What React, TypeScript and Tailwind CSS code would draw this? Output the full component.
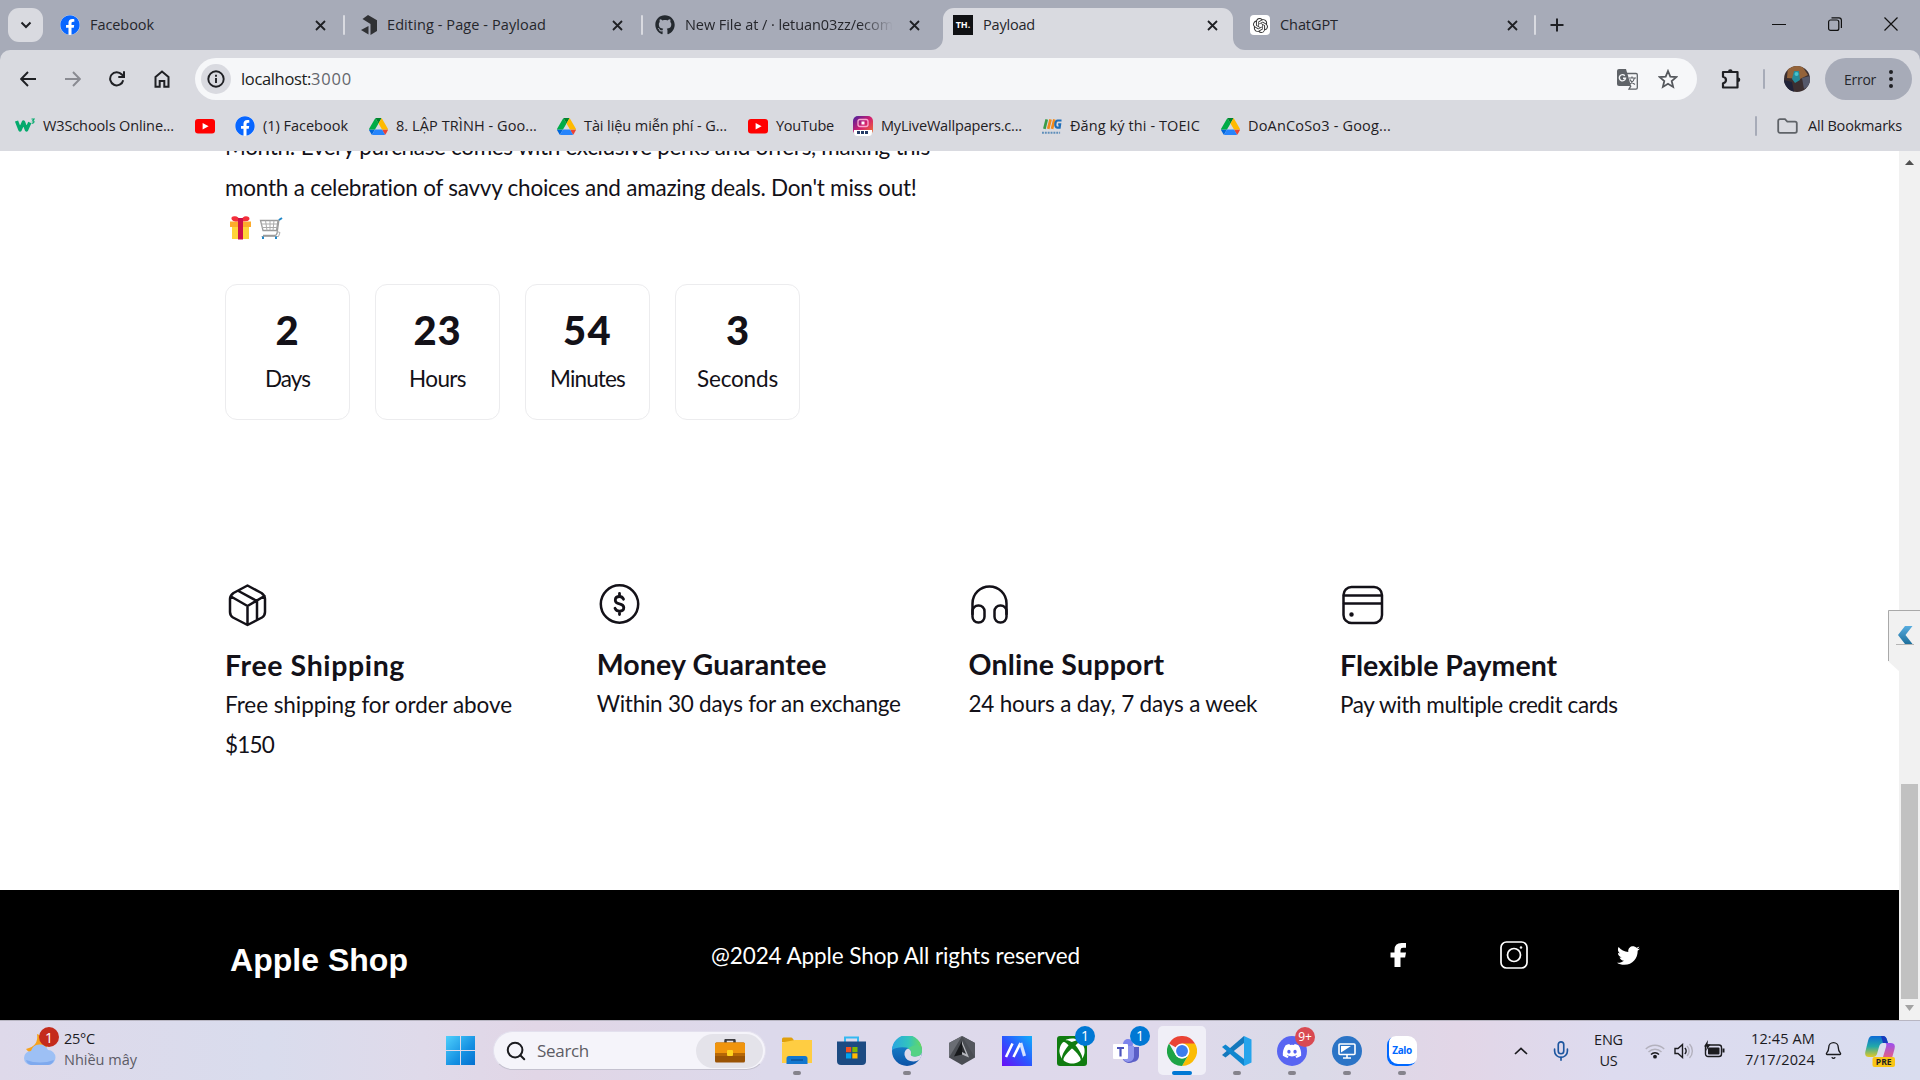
import React, { useLayoutEffect, useRef, useState } from "react";
import { FaGithub, FaFacebook, FaTwitter, FaXbox, FaDiscord } from "react-icons/fa";
import { SiOpenai } from "react-icons/si";
import { Search, Mic, Bell } from "lucide-react";

const UI = "font-['Open_Sans','Noto_Sans',sans-serif]";
const BODY = "font-['Lato','Open_Sans',sans-serif]";

/* One line of text whose tracking is adjusted so that it spans `w` pixels. */
function Fit({ w, children, className = "" }: { w: number; children: string; className?: string }) {
  const ref = useRef<HTMLSpanElement>(null);
  const [ls, setLs] = useState(0);
  useLayoutEffect(() => {
    const measure = () => {
      const el = ref.current;
      if (!el) return;
      el.style.letterSpacing = "0px";
      const natural = el.getBoundingClientRect().width;
      const next = (w - natural) / Array.from(children).length;
      el.style.letterSpacing = next + "px";
      setLs(next);
    };
    measure();
    document.fonts.ready.then(measure);
  }, [w, children]);
  return (
    <span className="block shrink-0 whitespace-pre">
      <span ref={ref} className={"inline-block " + className} style={{ letterSpacing: ls }}>
        {children}
      </span>
    </span>
  );
}

function Drive() {
  return (
    <svg className="h-[17px] w-[19px] shrink-0" viewBox="0 0 87.3 78">
      <path fill="#0066da" d="m6.6 66.85 3.85 6.65c.8 1.4 1.95 2.5 3.3 3.3l13.75-23.8h-27.5c0 1.55.4 3.1 1.2 4.5z" />
      <path fill="#00ac47" d="m43.65 25-13.75-23.8c-1.35.8-2.5 1.9-3.3 3.3l-25.4 44a9.06 9.06 0 0 0 -1.2 4.5h27.5z" />
      <path fill="#ea4335" d="m73.55 76.8c1.35-.8 2.5-1.9 3.3-3.3l1.6-2.75 7.65-13.25c.8-1.4 1.2-2.95 1.2-4.5h-27.5l5.85 11.5z" />
      <path fill="#00832d" d="m43.65 25 13.75-23.8c-1.35-.8-2.9-1.2-4.5-1.2h-18.5c-1.6 0-3.15.45-4.5 1.2z" />
      <path fill="#2684fc" d="m59.8 53h-32.3l-13.75 23.8c1.35.8 2.9 1.2 4.5 1.2h50.8c1.6 0 3.15-.45 4.5-1.2z" />
      <path fill="#ffba00" d="m73.4 26.5-12.7-22c-.8-1.4-1.95-2.5-3.3-3.3l-13.75 23.8 16.15 28h27.45c0-1.55-.4-3.1-1.2-4.5z" />
    </svg>
  );
}

function FbLogo() {
  return (
    <span className="grid size-5 shrink-0 place-items-center rounded-full bg-white">
      <FaFacebook className="size-5 text-[#0866ff]" />
    </span>
  );
}

function YtLogo() {
  return (
    <svg className="h-[15px] w-[20px] shrink-0" viewBox="0 0 20 15">
      <rect width="20" height="14.5" rx="3" fill="#f00" />
      <path d="M7.6 4v6.6l6-3.3z" fill="#fff" />
    </svg>
  );
}

function Close() {
  return (
    <svg className="size-[11px] shrink-0" viewBox="0 0 11 11" stroke="#1f2024" strokeWidth="1.8">
      <path d="M1 1l9 9M10 1l-9 9" />
    </svg>
  );
}

function Tab({ icon, label, w, pl, width, active, fade }: any) {
  return (
    <div className={width + " relative flex h-[42px] shrink-0 items-center pb-[8px] " + pl + (active ? " rounded-t-[11px] bg-[#d9dae0]" : "")}>
      {icon}
      <div className={"ml-[10px] h-[22px] leading-[21px] " + (fade ? "[mask-image:linear-gradient(90deg,#000_84%,transparent)]" : "")}>
        <Fit w={w} className={UI + " text-[14.5px] text-[#25262b]"}>{label}</Fit>
      </div>
      <div className="ml-auto pr-[15px]"><Close /></div>
      {active && (
        <>
          <svg className="absolute bottom-0 -left-[12px] size-3" viewBox="0 0 12 12"><path d="M12 0v12H0A12 12 0 0 0 12 0" fill="#d9dae0" /></svg>
          <svg className="absolute -right-[12px] bottom-0 size-3" viewBox="0 0 12 12"><path d="M0 0v12h12A12 12 0 0 1 0 0" fill="#d9dae0" /></svg>
        </>
      )}
    </div>
  );
}

const Sep = ({ c }: { c: string }) => <div className={"h-5 w-[2px] shrink-0 rounded " + c} />;

function TabStrip() {
  return (
    <div className="flex h-[50px] items-end bg-[#a7abb8]">
      <div className="mb-2 ml-2 grid h-[34px] w-[35px] shrink-0 place-items-center rounded-[11px] bg-[#d9dae0]">
        <svg className="h-2 w-3" viewBox="0 0 12 8" fill="none" stroke="#1f2024" strokeWidth="2"><path d="M1.5 1.5L6 6l4.500-4.500" /></svg>
      </div>
      <Tab width="w-[298px]" pl="pl-[17px]" icon={<FbLogo />} label="Facebook" w={64} />
      <div className="mb-[15px] ml-[2px]"><Sep c="bg-[#d9dae0]" /></div>
      <Tab
        width="w-[293px]" pl="pl-[16px]" label="Editing - Page - Payload" w={159}
        icon={<svg className="h-5 w-4 shrink-0" viewBox="0 0 16 20" fill="#303134"><path d="M7 0l9 5.300v10.700l-6.500 4V9L1.500 4zM7.500 11v8.500L0 15z" /></svg>}
      />
      <div className="mb-[15px] ml-[3px]"><Sep c="bg-[#d9dae0]" /></div>
      <Tab width="w-[292px]" pl="pl-[12px]" icon={<FaGithub className="size-5 shrink-0 text-[#24292f]" />} label="New File at / · letuan03zz/ecom" w={208} fade />
      <div className="ml-[8px]">
        <Tab
          active width="w-[290px]" pl="pl-[10px]" label="Payload" w={52}
          icon={<span className={UI + " grid size-5 shrink-0 place-items-center bg-[#101114] text-[9px] font-bold text-white"}>TH.</span>}
        />
      </div>
      <Tab
        width="w-[300px]" pl="pl-[17px]" label="ChatGPT" w={58}
        icon={<span className="grid size-5 shrink-0 place-items-center rounded-[4px] bg-white"><SiOpenai className="size-[15px] text-[#333]" /></span>}
      />
      <div className="mb-[15px] ml-[1px]"><Sep c="bg-[#d9dae0]" /></div>
      <svg className="mb-[18px] ml-[14px] size-[14px]" viewBox="0 0 14 14" stroke="#1f2024" strokeWidth="2"><path d="M7 .5v13M.5 7h13" /></svg>
      <div className="mb-[19px] ml-auto flex items-center gap-[42px] pr-[22px]">
        <svg className="size-[14px]" viewBox="0 0 14 14" stroke="#111"><path d="M0 7.500h14" /></svg>
        <svg className="size-[14px]" viewBox="0 0 14 14" fill="none" stroke="#111" strokeWidth="1.200"><rect x=".6" y="3" width="10.200" height="10.400" rx="2" /><path d="M3.500 .8h7.500a2.500 2.500 0 0 1 2.400 2.400v7.800" /></svg>
        <svg className="size-[14px]" viewBox="0 0 14 14" stroke="#111" strokeWidth="1.200"><path d="M.5 .5l13 13M13.500 .5l-13 13" /></svg>
      </div>
    </div>
  );
}

function Toolbar() {
  return (
    <div className="bg-[#a7abb8]">
      <div className="flex h-[58px] items-center rounded-t-[10px] bg-[#d9dae0] pr-2 pl-5">
        <svg className="h-4 w-4 shrink-0" viewBox="0 0 16 16" fill="none" stroke="#1f2024" strokeWidth="1.900"><path d="M16 8H1.500M8 1L1.200 8 8 15" /></svg>
        <svg className="ml-[29px] h-4 w-4 shrink-0" viewBox="0 0 16 16" fill="none" stroke="#8a8b92" strokeWidth="1.900"><path d="M0 8h14.500M8 1l6.800 7L8 15" /></svg>
        <svg className="ml-[28px] h-4 w-4 shrink-0" viewBox="0 0 16 16" fill="none" stroke="#1f2024" strokeWidth="2"><path d="M14.200 9.200A6.600 6.600 0 1 1 12.800 3.500L14.800 6M15 .3V6H9.300" /></svg>
        <svg className="ml-[29px] h-[18px] w-4 shrink-0" viewBox="0 0 16 18" fill="none" stroke="#1f2024" strokeWidth="2"><path d="M1.500 7L8 1.500 14.500 7v9.800h-4.200V11H5.700v5.800H1.500z" /></svg>
        <div className="ml-[25px] flex h-[42px] w-[1502px] shrink-0 items-center rounded-full bg-[#f6f7f9] pl-[6px]">
          <span className="grid size-[30px] shrink-0 place-items-center rounded-full bg-[#d9dae0]">
            <svg className="size-[18px]" viewBox="0 0 18 18" fill="none" stroke="#1f2024" strokeWidth="1.900"><circle cx="9" cy="9" r="7.700" /><path d="M9 8v5M9 4.700v2" /></svg>
          </span>
          <div className="ml-[10px] flex items-center leading-[22px]">
            <Fit w={70} className={UI + " text-[16.5px] text-[#1b1c20]"}>localhost:</Fit>
            <Fit w={41} className={UI + " text-[16.5px] text-[#64666c]"}>3000</Fit>
          </div>
          <svg className="ml-auto h-[21px] w-[21px] shrink-0" viewBox="0 0 21 21">
            <path d="M2 0h7l5 17H2a2 2 0 0 1-2-2V2a2 2 0 0 1 2-2z" fill="#5f6368" />
            <path d="M9.500 4.500H19a1.300 1.300 0 0 1 1.300 1.300v13a1.300 1.300 0 0 1-1.300 1.300h-7l2-3.500" fill="none" stroke="#5f6368" strokeWidth="1.300" />
            <path d="M7.800 6.700A3.100 3.100 0 1 0 8.500 9.300H6" fill="none" stroke="#f6f7f9" strokeWidth="1.400" />
            <path d="M11.800 9h7.200M15 7.500V9M17.500 9c-.5 3-3 5-4.300 6M13 10.500c1 2.500 3 4 5 5" fill="none" stroke="#5f6368" strokeWidth="1.200" />
          </svg>
          <svg className="mr-[19px] ml-[20px] size-5 shrink-0" viewBox="0 0 20 20" fill="none" stroke="#55585d" strokeWidth="1.800"><path d="M10 2l2.300 5.600 6 .5-4.600 3.900 1.400 5.900L10 14.700l-5.100 3.200L6.300 12 1.700 8.100l6-.5z" /></svg>
        </div>
        <svg className="ml-[23px] size-[22px] shrink-0" viewBox="0 0 22 22" fill="none" stroke="#1f2024" strokeWidth="2.200" strokeLinejoin="round"><path d="M3 4h14.500v15.500H3v-4.200q3-.8 3-3.300t-3-3.300z" /><path d="M8 3.500a2.300 2.300 0 0 1 4.600 0zM18 9.500a2.300 2.300 0 0 1 0 4.600z" fill="#1f2024" stroke="none" /></svg>
        <div className="ml-[21px]"><Sep c="bg-[#a7abb8]" /></div>
        <svg className="ml-[19px] size-[26px] shrink-0 rounded-full" viewBox="0 0 26 26">
          <rect width="26" height="26" fill="#3c2f30" /><path d="M4 0h14l6 9-8 4L3 12z" fill="#94633a" /><path d="M10 5h5l1 9-5 3-3-4z" fill="#258b9a" /><path d="M0 14l8 2 2 10H0z" fill="#1f2238" /><path d="M18 12l8-2v9l-6 4z" fill="#55586a" /><circle cx="12.500" cy="8" r="2" fill="#46c4cf" />
        </svg>
        <div className="ml-[15px] flex h-[42px] w-[87px] shrink-0 items-center rounded-full bg-[#a7abb8] pb-px pl-[19px]">
          <Fit w={32} className={UI + " text-[14px] text-[#25262b]"}>Error</Fit>
          <svg className="ml-[13px] h-[18px] w-1" viewBox="0 0 4 18" fill="#1f2024"><circle cx="2" cy="2" r="2" /><circle cx="2" cy="9" r="2" /><circle cx="2" cy="16" r="2" /></svg>
        </div>
      </div>
    </div>
  );
}

function Bookmark({ icon, label, w, ml }: any) {
  return (
    <div className={"flex shrink-0 items-center " + ml}>
      {icon}
      {label && <div className="ml-[8px] pb-[2px]"><Fit w={w} className={UI + " text-[14.5px] text-[#1f2024]"}>{label}</Fit></div>}
    </div>
  );
}

function Bookmarks() {
  return (
    <div className="flex h-[43px] items-center bg-[#d9dae0] pb-[7px] leading-5">
      <Bookmark ml="ml-[15px]" label="W3Schools Online..." w={131}
        icon={<svg className="h-4 w-5 shrink-0" viewBox="0 0 20 16" fill="none" stroke="#04aa6d"><path d="M1.500 3l3.500 9 3.500-8 3 8 3.300-7.500" strokeWidth="3.400" strokeLinejoin="round" /><path d="M16.500 1h2.500l-1.300 1.800c2 0 1.600 2.900-1 2.200" strokeWidth="1.200" /></svg>} />
      <Bookmark ml="ml-[21px]" icon={<YtLogo />} />
      <Bookmark ml="ml-[20px]" icon={<FbLogo />} label="(1) Facebook" w={85} />
      <Bookmark ml="ml-[21px]" icon={<Drive />} label="8. LẬP TRÌNH - Goo..." w={141} />
      <Bookmark ml="ml-[20px]" icon={<Drive />} label="Tài liệu miễn phí - G..." w={143} />
      <Bookmark ml="ml-[21px]" icon={<YtLogo />} label="YouTube" w={58} />
      <Bookmark ml="ml-[19px]" label="MyLiveWallpapers.c..." w={141}
        icon={<svg className="h-5 w-5 shrink-0" viewBox="0 0 20 20"><defs><linearGradient id="mlw" x1="0" x2="1" y2="1"><stop stopColor="#4520a0" /><stop offset=".5" stopColor="#d3206f" /><stop offset="1" stopColor="#f57b2a" /></linearGradient></defs><rect width="20" height="19" rx="5" fill="url(#mlw)" /><rect x="5" y="3.500" width="10" height="7" rx="2" fill="none" stroke="#f9a8d0" strokeWidth="1.300" /><path d="M8.500 5.500h3v3h-3z" fill="#fff" /><path d="M1 14h18v2.500a3.500 3.500 0 0 1-3.500 3.500h-11A3.500 3.500 0 0 1 1 16.500z" fill="#fff" /><path d="M4 16.500h12" stroke="#243b66" strokeWidth="3" strokeDasharray="3 1" /></svg>} />
      <Bookmark ml="ml-[20px]" label="Đăng ký thi - TOEIC" w={130}
        icon={<svg className="h-[17px] w-[20px] shrink-0" viewBox="0 0 21 17" fill="none"><path d="M2.500 11L5 1" stroke="#3a9c49" strokeWidth="2.800" /><path d="M6.500 11L9 1M10.500 11L13 1" stroke="#f18a1c" strokeWidth="2.800" /><path d="M20.500 2.200h-4c-3 0-3.500 7.500-.5 7.500h2.500l.5-3.500h-2" stroke="#1e6db8" strokeWidth="2.300" /><path d="M0 15h19" stroke="#5d8db9" strokeWidth="2" strokeDasharray="2 1" /></svg>} />
      <Bookmark ml="ml-[21px]" icon={<Drive />} label="DoAnCoSo3 - Goog..." w={143} />
      <div className="ml-auto flex items-center pr-[18px]">
        <Sep c="bg-[#a7abb8]" />
        <svg className="ml-5 h-4 w-[21px]" viewBox="0 0 21 16" fill="none" stroke="#5f6368" strokeWidth="1.800"><path d="M1.200 3a1.800 1.800 0 0 1 1.800-1.800h5l2.300 2.400H18A1.800 1.800 0 0 1 19.800 5.400V13A1.800 1.800 0 0 1 18 14.800H3A1.800 1.800 0 0 1 1.200 13z" /></svg>
        <div className="ml-[10px] pb-[2px]"><Fit w={94} className={UI + " text-[14.5px] text-[#1f2024]"}>All Bookmarks</Fit></div>
      </div>
    </div>
  );
}

const CartIcon = () => (
  <svg className="size-6" viewBox="0 0 24 24" fill="none">
    <path d="M20 3.500l-2 14q-.5 2-2.500 2H4" stroke="#9b9b9b" strokeWidth="1.300" />
    <path d="M1.500 4.500h17.500l-1.500 10H4z" stroke="#9b9b9b" strokeWidth="1.300" />
    <path d="M2 8h16.500M3 11.500h15M6.500 4.500l1.500 10M11 4.500v10M15 4.500l-1 10M18 15.500l3 1-1.500 4H2.500" stroke="#ababab" />
    <path d="M20 4l3-2" stroke="#2188c9" strokeWidth="2" /><path d="M4 20.500v2.500M17 20.500v2.500" stroke="#2188c9" strokeWidth="2" />
  </svg>
);

const GiftIcon = () => (
  <svg className="h-6 w-[21px]" viewBox="0 0 21 24">
    <path d="M2 9h17v14H2z" fill="#ffd338" /><path d="M0 5.500h21V11H0z" fill="#fdab2c" /><path d="M8 5h5v18.500H8z" fill="#cc1048" />
    <path d="M10.500 5.500Q2 6 1.500 3T5 .3q3.500 0 5.500 5.200Q12.500.3 16 .3T19.500 3t-9 2.500" fill="#f32f3a" /><path d="M8 2h5v4H8z" fill="#cc1048" />
  </svg>
);

function Count({ n, nw, label, w }: any) {
  return (
    <div className="flex h-[136px] w-[125px] flex-col items-center rounded-xl border border-[#ececee] pt-[20px]">
      <div className="h-[51px] leading-[51px]"><Fit w={nw} className={BODY + " text-[40px] font-black text-[#131118]"}>{n}</Fit></div>
      <div className="h-[46px] leading-[46px]"><Fit w={w} className={BODY + " text-[22.5px] text-[#131118]"}>{label}</Fit></div>
    </div>
  );
}

function Feature({ icon, title, tw, lines, down }: any) {
  return (
    <div className={"flex w-[371.700px] shrink-0 flex-col " + (down ? "pt-[1px]" : "")}>
      <div className="h-[62px]">{icon}</div>
      <div className="h-[40px] leading-[41px]"><Fit w={tw} className={BODY + " text-[28.5px] font-bold text-[#131118]"}>{title}</Fit></div>
      {lines.map(([t, w]: any) => (
        <div key={t} className="h-10 leading-[40px]"><Fit w={w} className={BODY + " text-[22.5px] text-[#131118]"}>{t}</Fit></div>
      ))}
    </div>
  );
}

const stroke = { fill: "none", stroke: "#131118", strokeWidth: 2.5, strokeLinecap: "round", strokeLinejoin: "round" } as const;

function Page() {
  return (
    <div className="relative flex h-[869px] bg-white">
      <div className="flex w-[1899px] flex-col">
        <div className="flex h-[739px] flex-col overflow-hidden pl-[225px]">
          <div className="-mt-[24px] h-[41px] shrink-0 leading-[40px]"><Fit w={704} className={BODY + " text-[22.5px] text-[#131118]"}>Month! Every purchase comes with exclusive perks and offers, making this</Fit></div>
          <div className="h-10 shrink-0 leading-[40px]"><Fit w={692} className={BODY + " text-[22.5px] text-[#131118]"}>month a celebration of savvy choices and amazing deals. Don't miss out!</Fit></div>
          <div className="flex h-10 shrink-0 items-center gap-2 pb-px pl-[5px]"><GiftIcon /><CartIcon /></div>
          <div className="mt-[36px] flex shrink-0 gap-[25px]">
            <Count n="2" nw={24} label="Days" w={45} />
            <Count n="23" nw={48} label="Hours" w={57} />
            <Count n="54" nw={49} label="Minutes" w={75} />
            <Count n="3" nw={23} label="Seconds" w={81} />
          </div>
          <div className="mt-[162px] flex">
            <Feature down title="Free Shipping" tw={180} lines={[["Free shipping for order above", 287], ["$150", 49]]}
              icon={<svg className="ml-[3px] h-[44px] w-[40px]" viewBox="0 0 40 44" {...stroke}><path d="M19.500 2.500l14 7.500q3.500 2.500 3.500 6v13q0 3.500-3 5.500L19.500 42 5 34.500q-3-2-3-5.500V16q0-3.500 3.500-6zM3 13.500L19.500 23 36.500 13M19.500 23v18.500M10.500 8L29 18v18" /></svg>} />
            <Feature title="Money Guarantee" tw={230} lines={[["Within 30 days for an exchange", 304]]}
              icon={<svg className="mt-px ml-[2px] h-[42px] w-[42px]" viewBox="0 0 42 42" {...stroke}><circle cx="20.500" cy="21" r="18.700" /><path d="M24.500 16.200q-1.300-2.700-4-2.700-4.200 0-4.200 3.700 0 2.800 4.200 3.600t4.300 3.800q0 3.600-4.300 3.600-3.200 0-4.500-3M20.500 10.500v3M20.500 28.500v3" strokeWidth="2.800" /></svg>} />
            <Feature title="Online Support" tw={196} lines={[["24 hours a day, 7 days a week", 289]]}
              icon={<svg className="mt-[2px] ml-[2px] h-[42px] w-[40px]" viewBox="0 0 40 42" {...stroke}><path d="M2.500 30V19.500a17 17 0 0 1 34 0V30" /><rect x="2.500" y="21.500" width="12" height="17" rx="5.800" /><rect x="24.500" y="21.500" width="12" height="17" rx="5.800" /></svg>} />
            <Feature down title="Flexible Payment" tw={217} lines={[["Pay with multiple credit cards", 278]]}
              icon={<svg className="mt-px ml-[1px] h-[44px] w-[44px]" viewBox="0 0 44 44" {...stroke}><rect x="2.500" y="3" width="38.500" height="36" rx="8" /><path d="M3 11.500h37.500M3 19.500h37.500" /><circle cx="10.500" cy="30.500" r="1" fill="#131118" /></svg>} />
          </div>
        </div>
        <div className="flex h-[130px] items-center bg-black pl-[230px] text-white">
          <div className="pt-[9px]"><Fit w={178} className="font-['Liberation_Sans',sans-serif] text-[32px] font-bold">Apple Shop</Fit></div>
          <div className="ml-[303px] pt-px"><Fit w={369} className={BODY + " text-[22.500px]"}>@2024 Apple Shop All rights reserved</Fit></div>
          <svg className="ml-[310px] h-[24px] w-[17px]" viewBox="0 0 17 24" fill="#fff"><path d="M4.500 24V14.500H.5V9.500h4V6.800Q4.500 0 11.500 0H16v4.800h-3q-2.500 0-2.500 2.400v2.300H16l-.9 5h-4.600V24z" /></svg>
          <svg className="ml-[93px] size-7" viewBox="0 0 28 28" fill="none" stroke="#fff" strokeWidth="1.700"><rect x="1" y="1" width="26" height="26" rx="5.500" /><circle cx="14" cy="14" r="6.500" /><circle cx="21" cy="6.500" r="1" fill="#fff" strokeWidth=".5" /></svg>
          <FaTwitter className="ml-[89px] size-[23px]" />
        </div>
      </div>
      <div className="flex w-[21px] flex-col items-center bg-[#f1f1f1] py-[7px]">
        <svg className="mt-[2px] h-[5px] w-[9px]" viewBox="0 0 9 5"><path d="M0 5L4.500 0 9 5z" fill="#505050" /></svg>
        <div className="mt-auto mb-[6px] h-[215px] w-[17px] bg-[#c1c1c1]" />
        <svg className="mb-[2px] h-[6px] w-[9px]" viewBox="0 0 9 6"><path d="M0 0h9L4.500 6z" fill="#a3a3a3" /></svg>
      </div>
      <svg className="absolute top-[459px] right-0 h-[64px] w-[32px]" viewBox="0 0 32 64">
        <defs><linearGradient id="chev" x2="0" y2="1"><stop stopColor="#58ade0" /><stop offset="1" stopColor="#1d6f9c" /></linearGradient></defs>
        <path d="M0 0h32v64H12V62L0 51z" fill="#f1f1f1" /><path d="M.5 51V.5H32" fill="none" stroke="#a9a9a9" />
        <path d="M8 34.500h18" stroke="#b5b5b5" /><path d="M17 16h7.500l-7 9 7 9H17l-7-9z" fill="url(#chev)" />
      </svg>
    </div>
  );
}

function Task({ children, dot, badge, red, active }: any) {
  return (
    <div className={"relative grid h-[49px] w-[48px] shrink-0 place-items-center rounded-[5px] " + (active ? "bg-[#f0eff7]" : "")}>
      {children}
      {badge && <span className={UI + " absolute right-[1px] grid size-5 place-items-center rounded-full leading-none text-white " + (red ? "top-[1px] bg-[#d94a52] text-[12px]" : "top-0 bg-[#0078d4] text-[14px]")}>{badge}</span>}
      {dot && <span className={"absolute bottom-0 h-1 rounded-full " + (active ? "w-5 bg-[#0078d4]" : "w-2 bg-[#85838c]")} />}
    </div>
  );
}

function Taskbar() {
  return (
    <div className={UI + " flex h-[60px] items-center border-t border-[#b8b6c2] bg-[linear-gradient(90deg,#ded9ea_0%,#d9dced_14%,#dfdaea_22%,#e1d6e6_28%,#dcd9eb_40%,#dfd9eb_60%,#dadae8_68%,#e2d6e7_76%,#dddbef_84%,#d9ddef_100%)] text-[#1b1b1f]"}>
      <div className="flex w-[420px] items-center pl-6">
        <div className="relative h-11 w-9">
          <svg className="h-11 w-9" viewBox="0 0 36 44"><path d="M13 5q2 12-11 15 6 8 15 3t8-13z" fill="#f6a21d" /><path d="M7 36a7 7 0 0 1 0-14 9 9 0 0 1 17-1 7.500 7.500 0 0 1 0 15z" fill="#9dc0f5" /><path d="M2 31a7 7 0 0 0 5 5h17a7 7 0 0 0 6-5q-14 5-28 0" fill="#7ea9ee" /></svg>
          <span className="absolute -top-[2px] left-[15px] grid size-5 place-items-center rounded-full bg-[#c42b1c] text-[14px] text-white">1</span>
        </div>
        <div className="ml-1 pb-[3px] leading-[20px]">
          <Fit w={31} className="text-[14.500px]">25°C</Fit>
          <Fit w={73} className="text-[14.500px] text-[#5c5b66]">Nhiều mây</Fit>
        </div>
      </div>
      <svg className="ml-[26px] size-[29px] shrink-0" viewBox="0 0 29 29"><defs><linearGradient id="win" x2="1" y2="1"><stop stopColor="#4fd0fc" /><stop offset=".6" stopColor="#1590e2" /><stop offset="1" stopColor="#0370d0" /></linearGradient></defs><path d="M0 0h14v14H0zM15 0h14v14H15zM0 15h14v14H0zM15 15h14v14H15z" fill="url(#win)" /></svg>
      <div className="ml-[18px] flex h-[39px] w-[273px] shrink-0 items-center rounded-full border border-[#e3e0ee] border-b-[#c4c1cf] bg-[#f5f4fa] pl-[11px]">
        <Search className="size-[22px]" strokeWidth={2.2} />
        <div className="ml-[10px]"><Fit w={52} className="text-[17px] text-[#5d5c64]">Search</Fit></div>
        <div className="mr-[2px] ml-auto grid h-[34px] w-[67px] place-items-center rounded-full bg-[#e4e3ea]">
          <svg className="h-6 w-[30px]" viewBox="0 0 30 24"><path d="M10.500 5V2q0-1.500 1.500-1.500h6q1.500 0 1.500 1.500v3" fill="none" stroke="#3c3c40" strokeWidth="2.500" /><rect y="3.500" width="30" height="20" rx="1.500" fill="#9a5305" /><path d="M0 5a1.500 1.500 0 0 1 1.500-1.500h27A1.500 1.500 0 0 1 30 5v9H0z" fill="#f0940c" /><path d="M0 14h30v3H0z" fill="#b66706" /><rect x="12" y="11" width="6" height="6" rx="1" fill="#ffd21e" /></svg>
        </div>
      </div>
      <div className="ml-[7px] flex shrink-0 gap-[7px]">
        <Task dot><svg className="h-[27px] w-[30px]" viewBox="0 0 30 27"><path d="M0 2q0-1.500 1.500-1.500H9q2 0 3.500 4.500H0z" fill="#e0a00c" /><path d="M0 5.500L13 3h17v23H0z" fill="#ffcd42" /><path d="M4.500 27v-5.500a2.500 2.500 0 0 1 2.500-2.500h16a2.500 2.500 0 0 1 2.500 2.500V27z" fill="#1277cf" /><path d="M9 23h12" stroke="#0b539b" strokeWidth="1.500" /></svg></Task>
        <Task><svg className="mr-px h-[29px] w-[29px]" viewBox="0 0 29 29"><path d="M8 7V1.500h13V7" fill="none" stroke="#35b9f2" strokeWidth="2" /><path d="M0 5.500h29V25a4 4 0 0 1-4 4H4a4 4 0 0 1-4-4z" fill="#1c4b82" /><path d="M9 11h5.200v5.200H9z" fill="#f25022" /><path d="M15.300 11h5.200v5.200h-5.200z" fill="#7fba00" /><path d="M9 17.300h5.200v5.200H9z" fill="#00a4ef" /><path d="M15.300 17.300h5.200v5.200h-5.200z" fill="#ffb900" /></svg></Task>
        <Task dot><svg className="size-[30px]" viewBox="0 0 30 30"><defs><linearGradient id="edA" x1="0" x2="1"><stop stopColor="#29a5e2" /><stop offset=".55" stopColor="#32c4bd" /><stop offset="1" stopColor="#69d95b" /></linearGradient><linearGradient id="edB" x2="0" y2="1"><stop stopColor="#1b93d8" /><stop offset="1" stopColor="#0c52a6" /></linearGradient></defs><circle cx="15" cy="15" r="15" fill="url(#edB)" /><path d="M0 14A15 15 0 0 1 30 14q0 6.500-7 6.500-5 0-4-3 1-5-5-6-9-1-14 2.500" fill="url(#edA)" /><path d="M30 14q0 6.500-7 6.500-5 0-4-3 .5-4-3-5-4 1.500-3.500 6.500 1.500 6.500 9 6.500 3.500 0 6-2 2.500-3 2.500-9.500" fill="#dcd9eb" /><path d="M16 12.500q4 1 3 5-1 3 4 3 7 0 7-6.500-1-3.500-4-5-6 0-10 3.500" fill="#54d285" /></svg></Task>
        <Task><svg className="h-[29px] w-[28px]" viewBox="0 0 28 29"><path d="M14 0l13 7v14.500L14 29 1 21.500V7z" fill="#4a4d53" /><path d="M14 0L1 7v14.500z" fill="#6a6d74" /><path d="M14 0l13 7v14.500z" fill="#54575e" /><path d="M14 5L6 20.500l8-2z" fill="#17191c" /><path d="M14 5v13.500l7 3z" fill="#b4b6bc" /><path d="M14 8v8l4 2z" fill="#2a2c30" /></svg></Task>
        <Task><svg className="size-[30px]" viewBox="0 0 30 30"><defs><linearGradient id="ma" x1="0" y1="1" x2="1" y2="0"><stop stopColor="#6a0cf5" /><stop offset=".5" stopColor="#2b57ff" /><stop offset="1" stopColor="#12aefb" /></linearGradient></defs><rect width="30" height="30" fill="url(#ma)" /><path d="M4 21L10.500 7.500M11.500 21L18.500 7" stroke="#fff" strokeWidth="2.600" fill="none" /><path d="M18.700 7l3.800 13" stroke="#d5e2ff" strokeWidth="3.200" /></svg></Task>
        <Task badge="1"><span className="grid size-[30px] place-items-center rounded-[3px] bg-[#107c10]"><FaXbox className="size-[26px] text-white" /></span></Task>
        <Task badge="1"><svg className="h-[26px] w-[28px]" viewBox="0 0 28 26"><circle cx="15" cy="6" r="5" fill="#7b83eb" /><path d="M9 9h17v9a6 6 0 0 1-6 6 8 8 0 0 1-11-4z" fill="#5b5fc7" /><path d="M10 8h11v11a6 6 0 0 1-11 2z" fill="#8f95ec" /><rect y="6" width="15" height="15" rx="1" fill="#fff" /><path d="M4 10h7M7.500 10v8.500" stroke="#4b53bc" strokeWidth="2.200" /></svg></Task>
        <Task dot active><svg className="size-[30px]" viewBox="0 0 48 48"><path d="M24 24L3.200 12a24 24 0 0 1 41.600 0z" fill="#ea4335" /><path d="M24 12h20.800A24 24 0 0 1 24 48l10.400-18z" fill="#fbbc04" /><path d="M3.200 12l10.400 18a12 12 0 0 0 20.800 0L24 48A24 24 0 0 1 3.200 12" fill="#1ea446" /><circle cx="24" cy="24" r="12" fill="#fff" /><circle cx="24" cy="24" r="9.500" fill="#3b7ded" /></svg></Task>
        <Task dot><svg className="size-[30px]" viewBox="0 0 30 30"><path d="M22 0l7.500 3.500v23L22 30z" fill="#25a4ec" /><path d="M22 7L3.500 21.500 0 19 22 0z" fill="#1478bc" /><path d="M22 23L3.500 8.500 0 11l22 19z" fill="#0f86cf" /></svg></Task>
        <Task dot badge="9+" red><span className="grid size-[30px] place-items-center rounded-full bg-[#5865f2]"><FaDiscord className="size-5 text-white" /></span></Task>
        <Task dot><span className="grid size-[30px] place-items-center rounded-full bg-[#2b74c6]"><svg className="h-4 w-[18px]" viewBox="0 0 18 16" fill="none" stroke="#fff" strokeWidth="1.600"><rect x="1" y="1" width="16" height="10.500" rx="1" /><path d="M9 12v3M5 15h8" /><path d="M3 9.500V3h10z" fill="#fff" stroke="none" /></svg></span></Task>
        <Task dot><span className="grid size-[30px] place-items-center rounded-[9px] bg-white shadow-[inset_2px_-2px_0_#0068ff]"><span className="text-[10px] font-bold tracking-[-0.400px] text-[#0068ff]">Zalo</span></span></Task>
      </div>
      <div className="ml-auto flex shrink-0 items-center">
        <svg className="h-2 w-[14px]" viewBox="0 0 14 8" fill="none" stroke="#1b1b1f" strokeWidth="1.700"><path d="M1 7l6-5.700L13 7" /></svg>
        <Mic className="ml-[22px] h-[22px] w-[22px] text-[#1d569f]" strokeWidth={1.8} />
        <div className="ml-[21px] flex w-[31px] flex-col items-center pb-px leading-[20px]">
          <Fit w={29} className="text-[14.5px]">ENG</Fit>
          <Fit w={18} className="text-[14.5px]">US</Fit>
        </div>
        <svg className="ml-[21px] h-4 w-5" viewBox="0 0 20 16" fill="none" strokeWidth="1.400"><path d="M.8 6a13 13 0 0 1 18.400 0" stroke="#b3b1bd" /><path d="M3.500 9a9 9 0 0 1 13 0" stroke="#b3b1bd" /><path d="M6 11.500a5.500 5.500 0 0 1 8 0" stroke="#1b1b1f" /><circle cx="10" cy="13.700" r="1.900" fill="#1b1b1f" /></svg>
        <svg className="ml-[9px] h-4 w-5" viewBox="0 0 20 16" fill="none" strokeWidth="1.400"><path d="M1 5.500h3L8.500 1.500v13L4 10.500H1z" stroke="#1b1b1f" /><path d="M10.800 5a4 4 0 0 1 0 6" stroke="#1b1b1f" /><path d="M13 3a7 7 0 0 1 0 10M15.500 1a10 10 0 0 1 0 14" stroke="#b3b1bd" /></svg>
        <svg className="mb-[3px] ml-[10px] h-[18px] w-[21px]" viewBox="0 0 21 18"><rect x="1.500" y="5" width="16" height="11.500" rx="2.500" fill="none" stroke="#1b1b1f" strokeWidth="1.400" /><rect x="4" y="7.500" width="11.500" height="7" rx="1" fill="#1b1b1f" /><path d="M18.500 8.500h2v4h-2zM4 0L0 6.500h3L2 11l4.500-6.500h-3z" fill="#1b1b1f" /></svg>
        <div className="ml-[20px] flex w-[70px] flex-col items-end pb-[3px] leading-[20px]">
          <Fit w={64} className="text-[14.5px]">12:45 AM</Fit>
          <Fit w={70} className="text-[14.5px]">7/17/2024</Fit>
        </div>
        <Bell className="ml-[9px] size-[19px]" strokeWidth={1.7} />
        <svg className="mr-[24px] ml-[22px] h-8 w-[31px]" viewBox="0 0 31 32"><defs><linearGradient id="cpA" y2="1" x2="0"><stop stopColor="#0c6bd6" /><stop offset=".5" stopColor="#22a9a9" /><stop offset="1" stopColor="#e5c925" /></linearGradient><linearGradient id="cpB" y2="1" x2="0"><stop stopColor="#9b50f0" /><stop offset="1" stopColor="#f4636b" /></linearGradient></defs><path d="M7 1h11q3 0 4 4l1 3h-5q-3 0-4 4l-2 7q-1 3-4 3H4q-5 0-3.500-6L3 6q1-5 4-5" fill="url(#cpA)" /><path d="M16 1h2q3 0 4 4l1 3h-5z" fill="#173bbd" /><path d="M20 8h6q5 0 3.500 6L27 23q-1 3-4 3h-9q3 0 4-4l3-10q1-4-1-4" fill="url(#cpB)" /><rect x="7.500" y="22" width="22.500" height="10" rx="2" fill="#f9c515" /><text x="18.700" y="30" textAnchor="middle" fontSize="8.500" fontWeight="700" fontFamily="Open Sans" fill="#222">PRE</text></svg>
      </div>
    </div>
  );
}

export default function App() {
  return (
    <div className="flex h-[1080px] w-[1920px] flex-col overflow-hidden bg-white">
      <TabStrip />
      <Toolbar />
      <Bookmarks />
      <Page />
      <Taskbar />
    </div>
  );
}
